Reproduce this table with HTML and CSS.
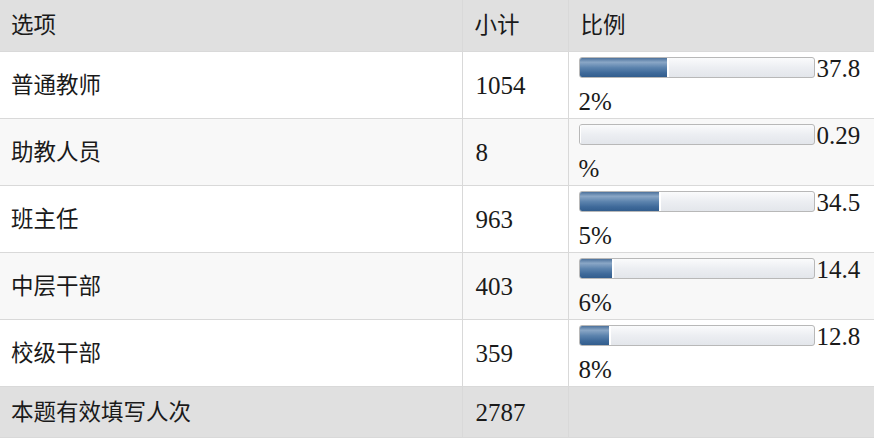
FILE: index.html
```html
<!DOCTYPE html>
<html lang="zh-CN">
<head>
<meta charset="utf-8">
<link rel="stylesheet" href="styles.css">
</head>
<body>
<table class="stats">
  <colgroup>
    <col class="c-opt"><col class="c-cnt"><col class="c-pct">
  </colgroup>
  <thead>
    <tr class="head"><th>选项</th><th>小计</th><th>比例</th></tr>
  </thead>
  <tbody>
    <tr class="row"><td>普通教师</td><td class="num">1054</td><td class="pct"><span class="bar"><span class="fill" style="width:37.82%"></span></span>37.82<wbr>%</td></tr>
    <tr class="row alt"><td>助教人员</td><td class="num">8</td><td class="pct"><span class="bar"><span class="fill" style="width:0.29%"></span></span>0.29<wbr>%</td></tr>
    <tr class="row"><td>班主任</td><td class="num">963</td><td class="pct"><span class="bar"><span class="fill" style="width:34.55%"></span></span>34.55<wbr>%</td></tr>
    <tr class="row alt"><td>中层干部</td><td class="num">403</td><td class="pct"><span class="bar"><span class="fill" style="width:14.46%"></span></span>14.46<wbr>%</td></tr>
    <tr class="row"><td>校级干部</td><td class="num">359</td><td class="pct"><span class="bar"><span class="fill" style="width:12.88%"></span></span>12.88<wbr>%</td></tr>
  </tbody>
  <tfoot>
    <tr class="foot"><td>本题有效填写人次</td><td class="num">2787</td><td></td></tr>
  </tfoot>
</table>
</body>
</html>
```
FILE: styles.css
```css
html, body {
  margin: 0;
  padding: 0;
  background: #fff;
}
.stats {
  width: 874px;
  border-collapse: collapse;
  table-layout: fixed;
  font-family: "Liberation Serif", "Noto Sans CJK SC", serif;
  font-size: 22.5px;
  color: #1a1a1a;
}
.c-opt { width: 462px; }
.c-cnt { width: 106px; }
.c-pct { width: 306px; }

.stats th, .stats td {
  border-bottom: 1px solid #d9d9d9;
  border-left: 1px solid #d9d9d9;
  text-align: left;
  font-weight: normal;
  vertical-align: middle;
  padding: 0 8px 0 12px;
  line-height: 33px;
}
.stats th:first-child, .stats td:first-child {
  border-left: none;
  padding-left: 11px;
}
.stats td.num {
  font-size: 25px;
  padding-left: 13px;
}
.head th {
  background: #e0e0e0;
  height: 51px;
}
.row td { height: 66px; background: #fff; }
.row.alt td { background: #f8f8f8; }
.foot td { background: #e0e0e0; height: 50px; }

.stats td.pct {
  word-break: break-all;
  padding-left: 10px;
  font-size: 25px;
}
.bar {
  display: inline-block;
  box-sizing: border-box;
  width: 236px;
  height: 21px;
  vertical-align: -1px;
  margin-right: 2px;
  border: 1px solid #b8b8b8;
  border-radius: 3px;
  background: linear-gradient(#fafbfc, #eceef2 50%, #e3e6eb);
  overflow: hidden;
}
.fill {
  display: block;
  height: 100%;
  margin: -1px 0 0 -1px;
  padding-bottom: 2px;
  border-radius: 3px 0 0 3px;
  border-right: 2px solid #fff;
  background: linear-gradient(#3e6592, #8aa7c6 25%, #5d84ae 50%, #3f6a9a 75%, #2f5a8a);
}
```
